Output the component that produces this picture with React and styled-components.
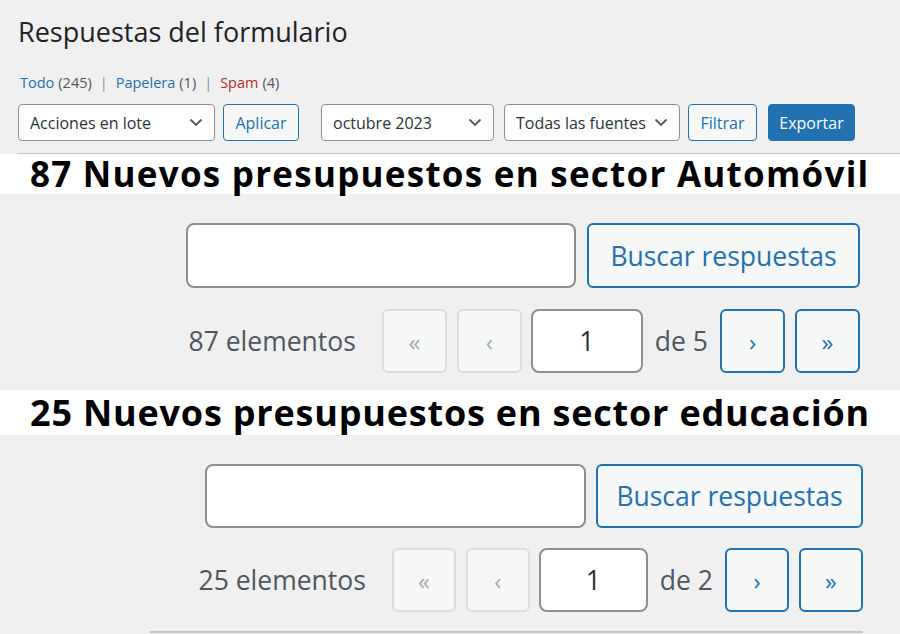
import React from 'react'
import styled, { createGlobalStyle } from 'styled-components'

const GlobalStyle = createGlobalStyle`
  html, body {
    margin: 0;
    padding: 0;
    background: #f0f0f1;
    font-family: "Open Sans", "Noto Sans", Arial, sans-serif;
    color: #1d2327;
  }
  * { box-sizing: border-box; }
`

function Chevron() {
  return (
    <svg width="14" height="9" viewBox="0 0 14 9" fill="none">
      <path d="M1.5 1.5l5.5 5.5 5.5-5.5" stroke="#50575e" strokeWidth="1.8" />
    </svg>
  )
}

// one block of results: search field + pagination
function ResultsBlock({ count, pages, sizes }) {
  return (
    <Block $s={sizes}>
      <SearchRow $s={sizes}>
        <SearchInput $s={sizes} />
        <BigButton $s={sizes}>Buscar respuestas</BigButton>
      </SearchRow>
      <PageRow>
        <Count>{count} elementos</Count>
        <NavGroup $s={sizes}>
          <NavButton $s={sizes} $disabled>«</NavButton>
          <NavButton $s={sizes} $disabled>‹</NavButton>
        </NavGroup>
        <PageInput $s={sizes}>1</PageInput>
        <Total>de {pages}</Total>
        <NavGroup $s={sizes}>
          <NavButton $s={sizes}>›</NavButton>
          <NavButton $s={sizes}>»</NavButton>
        </NavGroup>
      </PageRow>
    </Block>
  )
}

const first = {
  top: 29, right: 40, gap: 21, searchH: 65, inputW: 390, buttonW: 273, btnGap: 11,
  navW: 65, navGap: 10, pageW: 112, countGap: 26,
}
const second = {
  top: 29, right: 37, gap: 20, searchH: 64, inputW: 381, buttonW: 267, btnGap: 10,
  navW: 64, navGap: 10, pageW: 109, countGap: 25,
}

export default function App() {
  return (
    <>
      <GlobalStyle />
      <Page>
        <Header>
          <Title>Respuestas del formulario</Title>
          <Views>
            <ViewLink>Todo</ViewLink> <Num>(245)</Num>
            <Sep>|</Sep>
            <ViewLink>Papelera</ViewLink> <Num>(1)</Num>
            <Sep>|</Sep>
            <ViewLink $spam>Spam</ViewLink> <Num>(4)</Num>
          </Views>
          <Toolbar>
            <Select $w={197}>
              Acciones en lote
              <Chevron />
            </Select>
            <Button $w={76}>Aplicar</Button>
            <Select $w={173} $gap={22}>
              octubre 2023
              <Chevron />
            </Select>
            <Select $w={176} $gap={10}>
              Todas las fuentes
              <Chevron />
            </Select>
            <Button $w={69}>Filtrar</Button>
            <Button $w={87} $gap={11} $primary>Exportar</Button>
          </Toolbar>
        </Header>
        <Band $h={40} $size={35} $ls={1.25}>87 Nuevos presupuestos en sector Automóvil</Band>
        <ResultsBlock count={87} pages={5} sizes={first} />
        <Band $h={45} $size={36} $ls={0.8}>25 Nuevos presupuestos en sector educación</Band>
        <ResultsBlock count={25} pages={2} sizes={second} />
        <BottomRule />
      </Page>
    </>
  )
}

const Page = styled.div`
  width: 900px;
  height: 634px;
  overflow: hidden;
`
const Header = styled.div`
  position: relative;
  padding: 14px 0 12px 18px;
  border-bottom: 1px solid #c3c4c7;
  &::before {
    content: '';
    position: absolute;
    left: 0;
    bottom: -1px;
    width: 17px;
    height: 1px;
    background: #f0f0f1;
  }
`
const Title = styled.h1`
  margin: 0;
  font-size: 27px;
  font-weight: 400;
  line-height: 36px;
  color: #1d2327;
`
const Views = styled.div`
  margin-top: 23px;
  padding-left: 2px;
  display: flex;
  align-items: center;
  gap: 4px;
  font-size: 14.5px;
  line-height: 20px;
  color: #50575e;
`
const ViewLink = styled.span`
  color: ${(p) => (p.$spam ? '#b32d2e' : '#2271b1')};
`
const Num = styled.span`
  color: #50575e;
`
const Sep = styled.span`
  color: #8c8f94;
  margin: 0 4px;
`
const Toolbar = styled.div`
  margin-top: 11px;
  display: flex;
  align-items: center;
  gap: 8px;
`
const Select = styled.div`
  width: ${(p) => p.$w}px;
  height: 37px;
  margin-left: ${(p) => (p.$gap ? p.$gap - 8 : 0)}px;
  padding: 0 11px 0 11px;
  display: flex;
  align-items: center;
  justify-content: space-between;
  background: #fff;
  border: 1px solid #8c8f94;
  border-radius: 4px;
  font-size: 16px;
  color: #2c3338;
  white-space: nowrap;
`
const Button = styled.div`
  width: ${(p) => p.$w}px;
  height: 37px;
  margin-left: ${(p) => (p.$gap ? p.$gap - 8 : 0)}px;
  display: flex;
  align-items: center;
  justify-content: center;
  background: ${(p) => (p.$primary ? '#2271b1' : '#f6f7f7')};
  border: 1px solid #2271b1;
  border-radius: 4px;
  font-size: 16px;
  color: ${(p) => (p.$primary ? '#fff' : '#2271b1')};
`
const Band = styled.h2`
  margin: 0;
  height: ${(p) => p.$h}px;
  padding-left: 30px;
  background: #fff;
  font-size: ${(p) => p.$size}px;
  font-weight: 700;
  letter-spacing: ${(p) => p.$ls}px;
  line-height: ${(p) => p.$h}px;
  color: #000;
  white-space: nowrap;
`
const Block = styled.div`
  padding: ${(p) => p.$s.top}px ${(p) => p.$s.right}px 17px 0;
  display: flex;
  flex-direction: column;
  align-items: flex-end;
  gap: ${(p) => p.$s.gap}px;
`
const SearchRow = styled.div`
  display: flex;
  gap: ${(p) => p.$s.btnGap}px;
`
const SearchInput = styled.div`
  width: ${(p) => p.$s.inputW}px;
  height: ${(p) => p.$s.searchH}px;
  background: #fff;
  border: 2px solid #8c8f94;
  border-radius: 8px;
`
const BigButton = styled.div`
  width: ${(p) => p.$s.buttonW}px;
  height: ${(p) => p.$s.searchH}px;
  display: flex;
  align-items: center;
  justify-content: center;
  background: #f6f7f7;
  border: 2px solid #2271b1;
  border-radius: 6px;
  font-size: 26.5px;
  color: #2271b1;
`
const PageRow = styled.div`
  display: flex;
  align-items: center;
  height: 64px;
`
const Count = styled.span`
  margin-right: 26px;
  font-size: 26.5px;
  color: #50575e;
`
const NavGroup = styled.div`
  display: flex;
  gap: ${(p) => p.$s.navGap}px;
`
const NavButton = styled.div`
  width: ${(p) => p.$s.navW}px;
  height: 64px;
  display: flex;
  align-items: center;
  justify-content: center;
  background: #f6f7f7;
  border: 2px solid ${(p) => (p.$disabled ? '#dcdcde' : '#2271b1')};
  border-radius: 6px;
  font-size: 24px;
  color: ${(p) => (p.$disabled ? '#a7aaad' : '#2271b1')};
`
const PageInput = styled.div`
  width: ${(p) => p.$s.pageW}px;
  height: 64px;
  margin-left: 9px;
  display: flex;
  align-items: center;
  justify-content: center;
  background: #fff;
  border: 2px solid #8c8f94;
  border-radius: 8px;
  font-size: 26.5px;
  color: #2c3338;
`
const Total = styled.span`
  margin: 0 12px;
  font-size: 26.5px;
  color: #50575e;
`
const BottomRule = styled.div`
  height: 2px;
  margin: 2px 37px 0 150px;
  background: #c3c4c7;
`
